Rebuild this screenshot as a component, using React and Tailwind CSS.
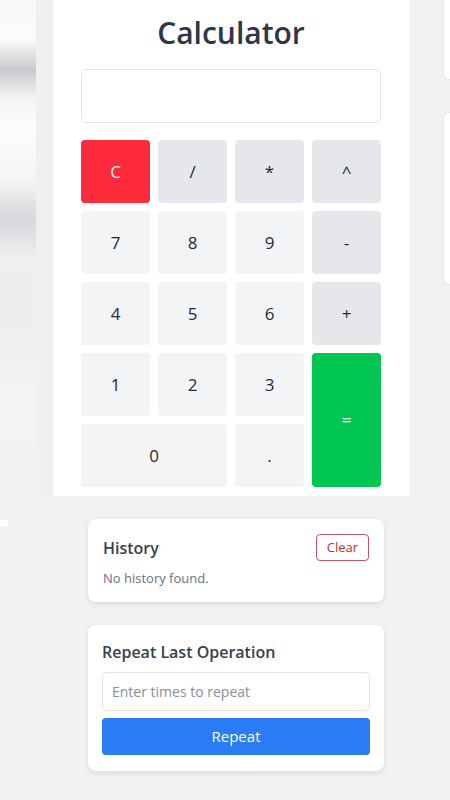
import React, { useState } from "react";

const keys = [
  { label: "C", kind: "clear" },
  { label: "/", kind: "op" },
  { label: "*", kind: "op" },
  { label: "^", kind: "op" },
  { label: "7" },
  { label: "8" },
  { label: "9" },
  { label: "-", kind: "op" },
  { label: "4" },
  { label: "5" },
  { label: "6" },
  { label: "+", kind: "op" },
  { label: "1" },
  { label: "2" },
  { label: "3" },
  { label: "=", kind: "equals" },
  { label: "0", kind: "zero" },
  { label: "." },
];

const keyClass = (kind) => {
  if (kind === "clear") return "bg-[#fd2a3b] text-white";
  if (kind === "op") return "bg-[#e5e7eb] text-[#1f2937]";
  if (kind === "equals") return "bg-[#02c652] text-white row-span-2";
  if (kind === "zero") return "bg-[#f3f4f6] text-[#1f2937] col-span-2";
  return "bg-[#f3f4f6] text-[#1f2937]";
};

const App = () => {
  const [display, setDisplay] = useState("");
  const [times, setTimes] = useState("");

  const press = (label) => {
    if (label === "C") return setDisplay("");
    if (label === "=") return;
    setDisplay((d) => d + label);
  };

  return (
    <div className="w-[450px] h-[800px] overflow-hidden bg-[#f1f2f4] font-['Open_Sans','Noto_Sans',sans-serif]">
      {/* Top: calculator */}
      <div className="flex h-[496px] overflow-hidden">
        <div className="w-[36px] shrink-0 h-full bg-[linear-gradient(180deg,#f7f8f9_0%,#fbfbfc_8%,#c9cacd_14%,#f4f5f6_20%,#fdfdfd_26%,#f5f5f6_36%,#d7d8db_44%,#eeeff1_52%,#eceef0_64%,#f2f3f5_80%,#f0f1f3_100%)]" />
        <div className="w-[17px] shrink-0 h-full bg-[#eef0f2]" />
        <div className="w-[356px] shrink-0 h-full bg-white px-[28px]">
          <h1 className="text-center text-[30px] font-semibold text-[#2d3748] leading-none pt-[18px]">
            Calculator
          </h1>
          <input
            value={display}
            readOnly
            className="mt-[21px] w-full h-[54px] border border-[#e2e4e8] rounded-[5px] px-3 text-right text-xl outline-none"
          />
          <div className="mt-[17px] grid grid-cols-4 gap-x-[8px] gap-y-[8px] auto-rows-[63px]">
            {keys.map((k) => (
              <button
                key={k.label}
                onClick={() => press(k.label)}
                className={`rounded-[4px] text-[17px] flex items-center justify-center ${keyClass(k.kind)}`}
              >
                {k.label}
              </button>
            ))}
          </div>
        </div>
        <div className="w-[34px] shrink-0 h-full bg-[#f1f2f4]" />
        <div className="w-[30px] shrink-0 flex flex-col">
          <div className="h-[80px] bg-white border-l border-b border-[#e5e7eb] rounded-bl-[6px]" />
          <div className="mt-[32px] h-[173px] bg-white border-l border-t border-b border-[#e5e7eb] rounded-l-[6px]" />
        </div>
      </div>

      {/* Bottom: history + repeat */}
      <div className="relative pt-[23px] flex flex-col gap-[23px] items-start pl-[88px]">
        <div className="absolute left-0 top-[24px] w-[8px] h-[6px] bg-white" />
        <div className="w-[296px] bg-white rounded-[8px] shadow-[0_2px_6px_rgba(0,0,0,0.1)] px-[15px] pt-[15px] pb-[13px]">
          <div className="flex items-center justify-between">
            <h2 className="text-[16px] font-semibold text-[#374151]">History</h2>
            <button className="h-[27px] px-[10px] border border-[#c3545c] rounded-[4px] text-[13px] text-[#c53030]">
              Clear
            </button>
          </div>
          <p className="mt-[8px] text-[13px] text-[#6b7280]">No history found.</p>
        </div>

        <div className="w-[296px] bg-white rounded-[8px] shadow-[0_2px_6px_rgba(0,0,0,0.1)] px-[14px] pt-[16px] pb-[16px]">
          <h2 className="text-[16px] font-semibold text-[#374151] leading-[22px]">
            Repeat Last Operation
          </h2>
          <input
            value={times}
            onChange={(e) => setTimes(e.target.value)}
            placeholder="Enter times to repeat"
            className="mt-[9px] w-full h-[39px] border border-[#e2e4e8] rounded-[4px] px-[9px] text-[14px] text-[#374151] placeholder:text-[#8a8f98] outline-none"
          />
          <button className="mt-[7px] w-full h-[37px] bg-[#2b7bf5] rounded-[4px] text-white text-[15px]">
            Repeat
          </button>
        </div>
      </div>
    </div>
  );
};

export default App;
